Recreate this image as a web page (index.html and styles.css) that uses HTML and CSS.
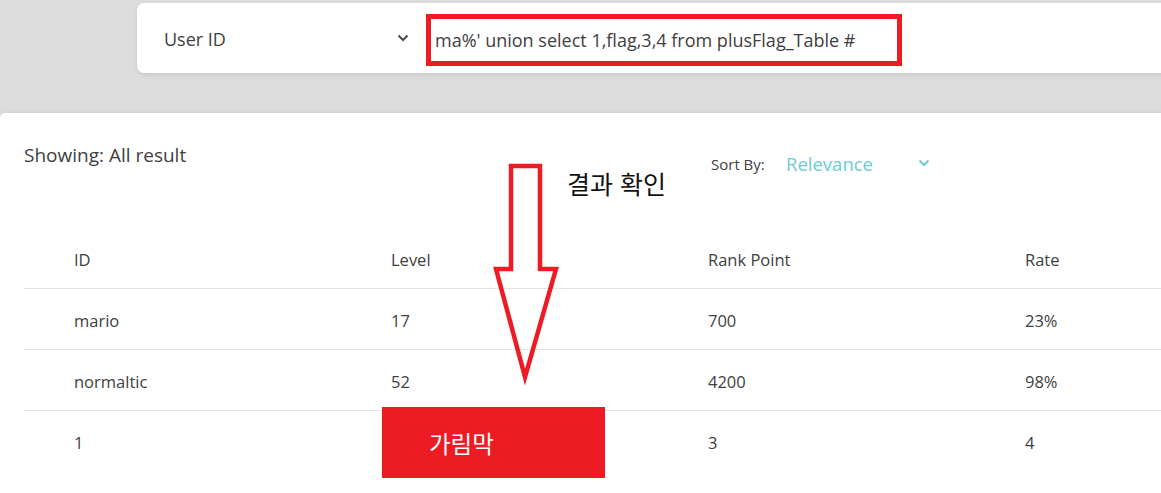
FILE: index.html
```html
<!DOCTYPE html>
<html lang="ko">
<head>
<meta charset="utf-8">
<title>Search</title>
<link rel="stylesheet" href="styles.css">
</head>
<body>
<div class="page">
  <div class="search-bar">
    <div class="search-card">
      <div class="select">
        <span class="select-label">User ID</span>
        <svg class="chev" width="12" height="8" viewBox="0 0 12 8"><path d="M1.5 1.5 L6 6 L10.5 1.5" fill="none" stroke="#4a4a4a" stroke-width="2"/></svg>
      </div>
      <div class="query-box">ma%' union select 1,flag,3,4 from plusFlag_Table #</div>
    </div>
  </div>

  <div class="panel">
    <div class="panel-head">
      <div class="showing">Showing: All result</div>
      <div class="sort">
        <span class="sort-label">Sort By:</span>
        <span class="sort-value">Relevance</span>
        <svg class="sort-chev" width="12" height="8" viewBox="0 0 12 8"><path d="M1.5 1.5 L6 6 L10.5 1.5" fill="none" stroke="#6ccbd8" stroke-width="2"/></svg>
      </div>
    </div>

    <div class="table">
      <div class="row head">
        <div class="cell">ID</div><div class="cell">Level</div><div class="cell">Rank Point</div><div class="cell">Rate</div>
      </div>
      <div class="row">
        <div class="cell">mario</div><div class="cell">17</div><div class="cell">700</div><div class="cell">23%</div>
      </div>
      <div class="row">
        <div class="cell">normaltic</div><div class="cell">52</div><div class="cell">4200</div><div class="cell">98%</div>
      </div>
      <div class="row">
        <div class="cell">1</div><div class="cell"></div><div class="cell">3</div><div class="cell">4</div>
      </div>
    </div>
  </div>

  <div class="note">결과 확인</div>
  <svg class="arrow" width="1161" height="493" viewBox="0 0 1161 493">
    <polygon points="511,166 540,166 540,269 556,269 525,377 496,269 511,269" fill="none" stroke="#ed1c24" stroke-width="4.5" stroke-linejoin="miter"/>
  </svg>
  <div class="mask">가림막</div>
</div>
</body>
</html>
```
FILE: styles.css
```css
html, body {
  margin: 0;
  padding: 0;
}
body {
  background: #dcdcdc;
  font-family: "Open Sans", "Noto Sans CJK KR", sans-serif;
  color: #404040;
  overflow: hidden;
}
.page {
  position: relative;
  width: 1161px;
  height: 493px;
  overflow: hidden;
}
.search-bar {
  padding: 3px 0 0 137px;
  height: 113px;
  box-sizing: border-box;
}
.search-card {
  width: 1100px;
  height: 70px;
  background: #fff;
  border-radius: 7px;
  box-shadow: 0 2px 4px rgba(0,0,0,0.08);
  display: flex;
  align-items: center;
}
.select {
  width: 289px;
  box-sizing: border-box;
  padding: 2px 17px 0 27px;
  display: flex;
  align-items: center;
  justify-content: space-between;
}
.select-label {
  font-size: 18px;
  color: #404040;
}
.chev {
  display: block;
  margin-top: -3px;
}
.query-box {
  width: 476px;
  height: 52px;
  box-sizing: border-box;
  border: 5px solid #ed1c24;
  padding: 0 0 0 4px;
  display: flex;
  align-items: center;
  font-size: 18px;
  color: #404040;
  white-space: nowrap;
  margin-top: 4px;
}
.panel {
  background: #fff;
  border-radius: 5px 0 0 0;
  height: 380px;
  box-shadow: 0 -1px 3px rgba(0,0,0,0.06);
  padding: 0 0 0 24px;
}
.panel-head {
  display: flex;
  align-items: flex-start;
  height: 115px;
  padding-top: 29px;
  box-sizing: border-box;
}
.showing {
  width: 687px;
  font-size: 19px;
  line-height: 26px;
}
.sort {
  display: flex;
  align-items: center;
  margin-top: 9px;
}
.sort-label {
  font-size: 15px;
  color: #404040;
  width: 75px;
}
.sort-value {
  font-size: 18.5px;
  color: #6ccbd8;
  width: 132px;
}
.sort-chev {
  display: block;
  margin-top: -2px;
}
.table {
  width: 1268px;
}
.row {
  display: grid;
  grid-template-columns: repeat(4, 317px);
  height: 61px;
  padding-top: 2px;
  align-items: center;
  border-top: 1px solid #e2e2e8;
  box-sizing: border-box;
}
.row.head {
  border-top: none;
  height: 60px;
}
.cell {
  padding-left: 50px;
  font-size: 16.5px;
  color: #404040;
}
.note {
  position: absolute;
  left: 567px;
  top: 166px;
  font-size: 25px;
  line-height: 34px;
  color: #111;
  font-family: "Noto Sans CJK KR", sans-serif;
}
.arrow {
  position: absolute;
  left: 0;
  top: 0;
  pointer-events: none;
}
.mask {
  position: absolute;
  left: 382px;
  top: 407px;
  width: 223px;
  height: 71px;
  box-sizing: border-box;
  background: #ed1c24;
  color: #fff;
  font-family: "Noto Sans CJK KR", sans-serif;
  font-size: 23.5px;
  display: flex;
  align-items: center;
  padding-left: 47px;
}
```
